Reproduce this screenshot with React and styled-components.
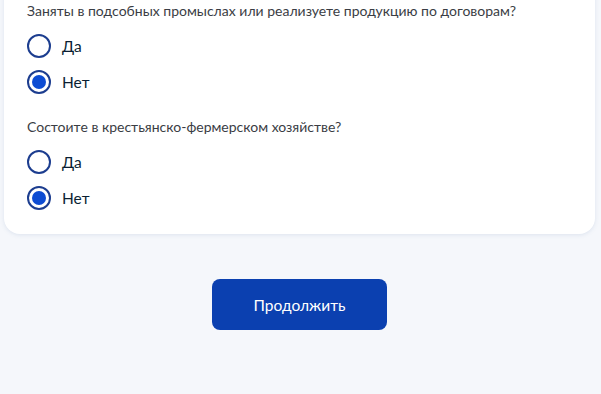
import React, { useState } from "react";
import styled, { createGlobalStyle } from "styled-components";

const Global = createGlobalStyle`
  html, body { margin: 0; padding: 0; background: #f5f7fb; }
  body { font-family: Lato, "Noto Sans", sans-serif; overflow: hidden; }
`;

const Page = styled.div`
  height: 394px;
  padding: 0 6px 0 4px;
  box-sizing: border-box;
  display: flex;
  flex-direction: column;
  align-items: stretch;
`;

const Card = styled.div`
  margin-top: -21px;
  background: #fff;
  border-radius: 0 0 16px 16px;
  box-shadow: 0 1px 4px rgba(102, 128, 175, 0.16);
  padding: 24px 21px 24px 23px;
  display: flex;
  flex-direction: column;
`;

const Question = styled.div`
  font-size: 14px;
  line-height: 16px;
  color: #3a3d44;
  margin-bottom: ${(p) => p.$gap}px;
`;

const Group = styled.div`
  display: flex;
  flex-direction: column;
  gap: 12px;
  margin-bottom: ${(p) => p.$after}px;
`;

const Option = styled.label`
  display: flex;
  align-items: center;
  gap: 11px;
  height: 24px;
  cursor: pointer;
  font-size: 15.5px;
  color: #0b1f33;
`;

const Circle = styled.span`
  width: 24px;
  height: 24px;
  box-sizing: border-box;
  border-radius: 50%;
  border: 2px solid #1c3d8f;
  display: flex;
  align-items: center;
  justify-content: center;
  flex-shrink: 0;
  &::after {
    content: "";
    width: 14px;
    height: 14px;
    border-radius: 50%;
    background: #0d4cd3;
    display: ${(p) => (p.$checked ? "block" : "none")};
  }
`;

const Footer = styled.div`
  display: flex;
  justify-content: center;
  padding-top: 45px;
`;

const Button = styled.button`
  width: 175px;
  height: 51px;
  border: none;
  border-radius: 8px;
  background: #0b40b0;
  color: #fff;
  font-family: Lato, "Noto Sans", sans-serif;
  font-size: 15.5px;
  cursor: pointer;
`;

function RadioGroup({ options, value, onChange, after }) {
  return (
    <Group $after={after}>
      {options.map((o) => (
        <Option key={o} onClick={() => onChange(o)}>
          <Circle $checked={value === o} />
          {o}
        </Option>
      ))}
    </Group>
  );
}

export default function App() {
  const [a, setA] = useState("Нет");
  const [b, setB] = useState("Нет");
  return (
    <>
      <Global />
      <Page>
        <Card>
          <Question $gap={15}>
            Заняты в подсобных промыслах или реализуете продукцию по договорам?
          </Question>
          <RadioGroup options={["Да", "Нет"]} value={a} onChange={setA} after={25} />
          <Question $gap={15}>Состоите в крестьянско-фермерском хозяйстве?</Question>
          <RadioGroup options={["Да", "Нет"]} value={b} onChange={setB} after={0} />
        </Card>
        <Footer>
          <Button>Продолжить</Button>
        </Footer>
      </Page>
    </>
  );
}
